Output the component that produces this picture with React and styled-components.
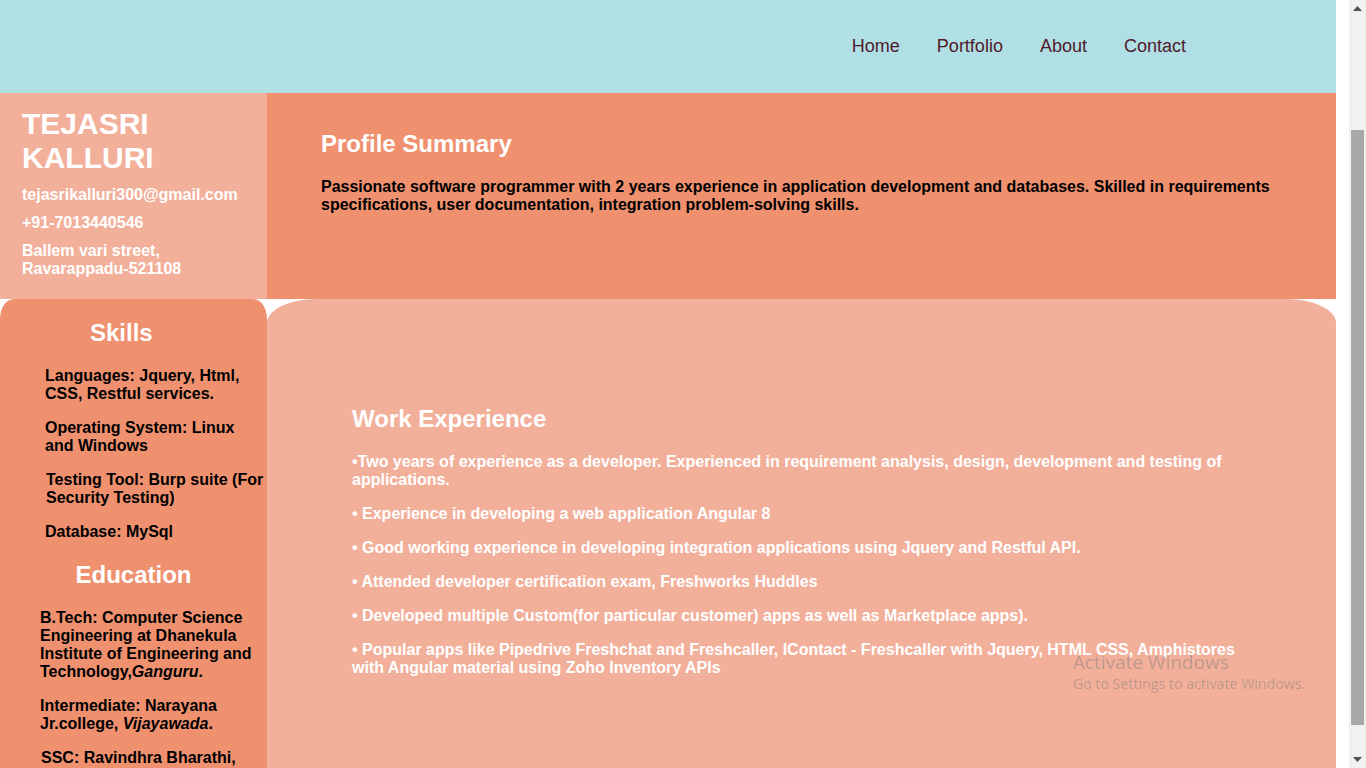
import React from "react";
import styled, { createGlobalStyle } from "styled-components";

const GlobalStyle = createGlobalStyle`
  html, body {
    margin: 0;
    padding: 0;
    overflow: hidden;
    background: #ffffff;
  }
  body {
    font-family: "Liberation Sans", Arial, sans-serif;
  }
  * { box-sizing: border-box; }
`;

const Viewport = styled.div`
  display: flex;
  width: 1366px;
  height: 768px;
  overflow: hidden;
  background: #ffffff;
`;

const Main = styled.div`
  width: 1336px;
  flex: none;
  display: flex;
  flex-direction: column;
  height: 768px;
  overflow: hidden;
`;

const Spacer = styled.div`
  width: 13px;
  flex: none;
  background: #ffffff;
`;

const Scrollbar = styled.div`
  width: 17px;
  flex: none;
  background: #f1f1f1;
  display: flex;
  flex-direction: column;
  align-items: center;
`;

const ArrowBox = styled.div`
  width: 17px;
  height: 17px;
  flex: none;
  display: flex;
  align-items: center;
  justify-content: center;
`;

const Track = styled.div`
  flex: 1;
  width: 17px;
  padding: 113px 2px 0 2px;
`;

const Thumb = styled.div`
  width: 13px;
  height: 595px;
  background: #a8a8a8;
`;

const Header = styled.header`
  height: 93px;
  flex: none;
  background: #b0dfe5;
  display: flex;
  align-items: center;
  justify-content: flex-end;
  padding-right: 150px;
  padding-bottom: 2px;
  gap: 37px;
`;

const NavLink = styled.a`
  font-size: 18px;
  color: #4f1a2b;
  text-decoration: none;
  line-height: 22px;
`;

const TopRow = styled.div`
  display: flex;
  height: 206px;
  flex: none;
`;

const ContactBox = styled.div`
  width: 267px;
  flex: none;
  background: #f2b09b;
  padding: 14px 10px 0 22px;
  color: #ffffff;
  font-weight: bold;
`;

const Name = styled.h1`
  margin: 0 0 11px;
  font-size: 30px;
  line-height: 34px;
  font-weight: bold;
`;

const ContactLine = styled.p`
  margin: 0 0 10px;
  font-size: 16px;
  line-height: 18px;
`;

const Summary = styled.section`
  flex: 1;
  background: #ef906f;
  padding: 37px 54px 0;
`;

const SectionTitle = styled.h2`
  margin: 0;
  font-size: 24px;
  line-height: 28px;
  font-weight: bold;
  color: #ffffff;
`;

const SummaryText = styled.p`
  margin: 20px 0 0;
  font-size: 16px;
  line-height: 18px;
  font-weight: bold;
  color: #000000;
`;

const BottomRow = styled.div`
  display: flex;
  align-items: stretch;
  flex: 1;
  min-height: 0;
`;

const Sidebar = styled.aside`
  width: 267px;
  flex: none;
  background: #ef906f;
  border-radius: 14px 14px 0 0 / 20px 20px 0 0;
  padding-top: 20px;
`;

const SideTitle = styled(SectionTitle)`
  text-align: ${(p) => (p.$center ? "center" : "left")};
  padding-left: ${(p) => p.$indent || 0}px;
  margin-top: ${(p) => p.$top || 0}px;
  margin-bottom: 20px;
`;

const SideList = styled.div`
  padding-left: ${(p) => p.$indent}px;
  display: flex;
  flex-direction: column;
  gap: 16px;
`;

const SideItem = styled.p`
  margin: 0;
  font-size: 16px;
  line-height: 18px;
  font-weight: bold;
  color: #000000;
  padding-left: ${(p) => p.$nudge || 0}px;
`;

const Experience = styled.section`
  flex: 1;
  background: #f2b09b;
  border-radius: 50px 50px 0 0 / 24px 24px 0 0;
  padding: 106px 85px 0;
`;

const ExpList = styled.div`
  margin-top: 20px;
  display: flex;
  flex-direction: column;
  gap: 16px;
`;

const ExpItem = styled.p`
  margin: 0;
  font-size: 16px;
  line-height: 18px;
  font-weight: bold;
  color: #ffffff;
`;

const Watermark = styled.div`
  position: fixed;
  left: 1073px;
  top: 650px;
  font-family: "Open Sans", "Noto Sans", sans-serif;
  color: rgba(120, 120, 120, 0.42);
  pointer-events: none;
`;

const WatermarkTitle = styled.div`
  font-size: 19px;
  line-height: 24px;
`;

const WatermarkSub = styled.div`
  font-size: 14.2px;
  line-height: 20px;
`;

const skills = [
  { text: "Languages: Jquery, Html, CSS, Restful services." },
  { text: "Operating System: Linux and Windows" },
  { text: "Testing Tool: Burp suite (For Security Testing)", nudge: 1 },
  { text: "Database: MySql" },
];

const experience = [
  "•Two years of experience as a developer. Experienced in requirement analysis, design, development and testing of applications.",
  "• Experience in developing a web application Angular 8",
  "• Good working experience in developing integration applications using Jquery and Restful API.",
  "• Attended developer certification exam, Freshworks Huddles",
  "• Developed multiple Custom(for particular customer) apps as well as Marketplace apps).",
  "• Popular apps like Pipedrive Freshchat and Freshcaller, IContact - Freshcaller with Jquery, HTML CSS, Amphistores with Angular material using Zoho Inventory APIs",
];

export default function App() {
  return (
    <>
      <GlobalStyle />
      <Viewport>
        <Main>
          <Header>
            <NavLink href="#">Home</NavLink>
            <NavLink href="#">Portfolio</NavLink>
            <NavLink href="#">About</NavLink>
            <NavLink href="#">Contact</NavLink>
          </Header>
          <TopRow>
            <ContactBox>
              <Name>
                TEJASRI
                <br />
                KALLURI
              </Name>
              <ContactLine>tejasrikalluri300@gmail.com</ContactLine>
              <ContactLine>+91-7013440546</ContactLine>
              <ContactLine>
                Ballem vari street,
                <br />
                Ravarappadu-521108
              </ContactLine>
            </ContactBox>
            <Summary>
              <SectionTitle>Profile Summary</SectionTitle>
              <SummaryText>
                Passionate software programmer with 2 years experience in application development and databases.
                Skilled in requirements specifications, user documentation, integration problem-solving skills.
              </SummaryText>
            </Summary>
          </TopRow>
          <BottomRow>
            <Sidebar>
              <SideTitle $indent={90}>Skills</SideTitle>
              <SideList $indent={45}>
                {skills.map((s) => (
                  <SideItem key={s.text} $nudge={s.nudge}>
                    {s.text}
                  </SideItem>
                ))}
              </SideList>
              <SideTitle $center $top={20}>
                Education
              </SideTitle>
              <SideList $indent={40}>
                <SideItem>
                  B.Tech: Computer Science Engineering at Dhanekula Institute of Engineering and Technology,
                  <i>Ganguru</i>.
                </SideItem>
                <SideItem>
                  Intermediate: Narayana Jr.college, <i>Vijayawada</i>.
                </SideItem>
                <SideItem $nudge={1}>SSC: Ravindhra Bharathi, Vijayawada.</SideItem>
              </SideList>
            </Sidebar>
            <Experience>
              <SectionTitle>Work Experience</SectionTitle>
              <ExpList>
                {experience.map((e) => (
                  <ExpItem key={e}>{e}</ExpItem>
                ))}
              </ExpList>
            </Experience>
          </BottomRow>
        </Main>
        <Spacer />
        <Scrollbar>
          <ArrowBox>
            <svg width="9" height="5" viewBox="0 0 9 5">
              <path d="M0 5 L4.5 0 L9 5 Z" fill="#505050" />
            </svg>
          </ArrowBox>
          <Track>
            <Thumb />
          </Track>
          <ArrowBox>
            <svg width="9" height="5" viewBox="0 0 9 5">
              <path d="M0 0 L9 0 L4.5 5 Z" fill="#505050" />
            </svg>
          </ArrowBox>
        </Scrollbar>
      </Viewport>
      <Watermark>
        <WatermarkTitle>Activate Windows</WatermarkTitle>
        <WatermarkSub>Go to Settings to activate Windows.</WatermarkSub>
      </Watermark>
    </>
  );
}
